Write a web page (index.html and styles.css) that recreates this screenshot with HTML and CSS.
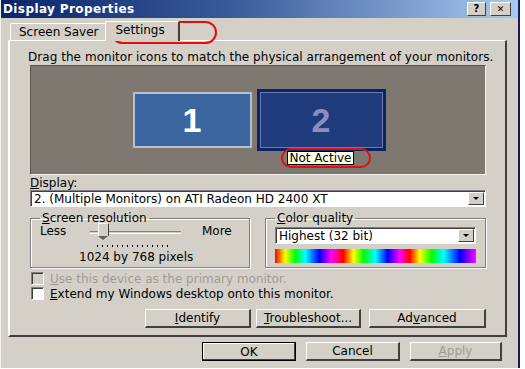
FILE: index.html
```html
<!DOCTYPE html>
<html lang="en">
<head>
  <meta charset="UTF-8">
  <title>Display Properties</title>
  <link rel="stylesheet" href="styles.css">
</head>
<body>
  <div class="window">
    <div class="titlebar">
      <span class="title">Display Properties</span>
      <div class="title-buttons">
        <span class="tbtn">?</span>
        <span class="tbtn close">&#x2715;</span>
      </div>
    </div>

    <div class="content">
      <div class="tabs">
        <div class="tab">Screen Saver</div>
        <div class="tab active">Settings</div>
      </div>

      <div class="panel">
        <p class="hint">Drag the monitor icons to match the physical arrangement of your monitors.</p>

        <div class="monitors">
          <div class="monitor one">1</div>
          <div class="monitor two">
            <span class="digit">2</span>
            <span class="tooltip">Not Active</span>
          </div>
        </div>

        <div class="field-label"><u>D</u>isplay:</div>
        <div class="select">
          <span class="select-text">2. (Multiple Monitors) on ATI Radeon HD 2400 XT</span>
          <span class="arrow"></span>
        </div>

        <div class="groups">
          <fieldset class="group res">
            <legend><u>S</u>creen resolution</legend>
            <div class="slider-row">
              <span class="less">Less</span>
              <div class="slider">
                <div class="track"></div>
                <div class="thumb"></div>
                <div class="ticks"></div>
              </div>
              <span class="more">More</span>
            </div>
            <div class="pixels">1024 by 768 pixels</div>
          </fieldset>

          <fieldset class="group color">
            <legend><u>C</u>olor quality</legend>
            <div class="select small">
              <span class="select-text">Highest (32 bit)</span>
              <span class="arrow"></span>
            </div>
            <div class="spectrum"></div>
          </fieldset>
        </div>

        <div class="check disabled"><span class="box"></span><span><u>U</u>se this device as the primary monitor.</span></div>
        <div class="check"><span class="box"></span><span><u>E</u>xtend my Windows desktop onto this monitor.</span></div>

        <div class="panel-buttons">
          <button class="btn identify"><u>I</u>dentify</button>
          <button class="btn trouble"><u>T</u>roubleshoot...</button>
          <button class="btn advanced">Ad<u>v</u>anced</button>
        </div>
      </div>

      <div class="footer">
        <button class="btn wide default">OK</button>
        <button class="btn wide">Cancel</button>
        <button class="btn wide apply disabled"><u>A</u>pply</button>
      </div>
    </div>

    <span class="mark mark-tab"></span>
    <span class="mark mark-tip"></span>
  </div>
</body>
</html>
```

FILE: styles.css
```css
body {
  margin: 0;
  background: #fff;
  font-family: "DejaVu Sans", Verdana, sans-serif;
  font-size: 12px;
  color: #000;
}

.window {
  position: relative;
  width: 520px;
  height: 368px;
  background: #d4d0c8;
  border-right: 2px solid #101c5c;
  border-left: 1px solid #f4f2ee;
  box-sizing: border-box;
}

.titlebar {
  height: 18px;
  display: flex;
  align-items: center;
  justify-content: space-between;
  padding: 0 7px 0 2px;
  background: linear-gradient(to right, #0a246a, #3a5c9a 45%, #a6caf0);
}

.title {
  color: #fff;
  font-weight: bold;
  letter-spacing: 0.4px;
}

.title-buttons {
  display: flex;
  gap: 4px;
}

.tbtn {
  width: 17px;
  height: 12px;
  line-height: 12px;
  text-align: center;
  font-size: 10px;
  font-weight: bold;
  background: #d4d0c8;
  border-top: 1px solid #fff;
  border-left: 1px solid #fff;
  border-right: 1px solid #404040;
  border-bottom: 1px solid #404040;
}

.tbtn.close {
  width: 19px;
  font-size: 9px;
}

.content {
  padding: 0 11px 0 7px;
}

.tabs {
  display: flex;
  align-items: flex-end;
  height: 22px;
  padding-left: 2px;
}

.tab {
  height: 16px;
  line-height: 16px;
  padding: 0 7px 0 8px;
  border-top: 1px solid #fff;
  border-left: 1px solid #fff;
  border-right: 1px solid #404040;
  border-radius: 2px 2px 0 0;
}

.tab.active {
  height: 19px;
  line-height: 17px;
  padding: 0 13px 0 9px;
  margin-left: -1px;
  margin-bottom: -1px;
  background: #d4d0c8;
  border-right: 2px solid #404040;
  position: relative;
  z-index: 1;
}

.panel {
  height: 297px;
  box-sizing: border-box;
  border-top: 1px solid #fff;
  border-left: 2px solid #fff;
  border-right: 2px solid #404040;
  border-bottom: 2px solid #404040;
  padding: 0 19px 0 20px;
  display: flex;
  flex-direction: column;
}

.hint {
  margin: 9px 0 0 -2px;
  line-height: 14px;
  white-space: nowrap;
  letter-spacing: 0.05px;
}

.monitors {
  margin-top: 1px;
  height: 110px;
  background: #7e7871;
  border-top: 1px solid #5a554f;
  border-left: 1px solid #5a554f;
  border-right: 1px solid #f4f2ee;
  border-bottom: 1px solid #f4f2ee;
  display: flex;
  justify-content: center;
  align-items: center;
  gap: 5px;
  box-sizing: border-box;
}

.monitor {
  box-sizing: border-box;
  display: flex;
  align-items: center;
  justify-content: center;
  font-family: "Liberation Sans", Arial, sans-serif;
  font-weight: bold;
  font-size: 34px;
}

.monitor.one {
  width: 119px;
  height: 56px;
  background: #3b66a0;
  border: 2px solid #b6bfcc;
  color: #fff;
  margin-left: 2px;
}

.monitor.two {
  position: relative;
  width: 129px;
  height: 62px;
  background: #1f3b7b;
  border: 3px solid #0c2266;
  box-shadow: inset 0 0 0 1px #6a7cb0;
  color: #8a8ec4;
}

.tooltip {
  position: absolute;
  top: 59px;
  left: 27px;
  font-family: "DejaVu Sans", Verdana, sans-serif;
  font-weight: normal;
  font-size: 12px;
  line-height: 12px;
  color: #000;
  background: #ffffe1;
  border: 1px solid #000;
  padding: 0 2px;
  white-space: nowrap;
}

.field-label {
  margin-top: 2px;
  line-height: 13px;
}

.select {
  height: 17px;
  box-sizing: border-box;
  display: flex;
  align-items: center;
  justify-content: space-between;
  background: #fff;
  border-top: 1px solid #808080;
  border-left: 1px solid #808080;
  border-right: 1px solid #fff;
  border-bottom: 1px solid #fff;
  box-shadow: inset 1px 1px 0 #404040;
  padding-left: 3px;
}

.select-text {
  white-space: nowrap;
}

.arrow {
  width: 16px;
  height: 13px;
  margin-right: 1px;
  background: #d4d0c8;
  border-top: 1px solid #fff;
  border-left: 1px solid #fff;
  border-right: 1px solid #404040;
  border-bottom: 1px solid #404040;
  box-sizing: border-box;
  position: relative;
}

.arrow::after {
  content: "";
  position: absolute;
  left: 4px;
  top: 4px;
  border-left: 3px solid transparent;
  border-right: 3px solid transparent;
  border-top: 3px solid #000;
}

.groups {
  display: flex;
  gap: 15px;
  margin-top: 5px;
}

.group {
  margin: 0;
  height: 56px;
  box-sizing: border-box;
  border: 1px solid #808080;
  box-shadow: 1px 1px 0 #fff, inset 1px 1px 0 #fff;
  padding: 0 9px 0 9px;
}

.group legend {
  padding: 0 2px;
  line-height: 13px;
}

.group.res {
  width: 220px;
}

.group.color {
  flex: 1;
}

.slider-row {
  display: flex;
  align-items: flex-start;
  height: 26px;
}

.less {
  width: 50px;
  line-height: 13px;
}

.slider {
  position: relative;
  width: 91px;
  height: 26px;
}

.track {
  position: absolute;
  top: 6px;
  left: 0;
  right: 0;
  height: 1px;
  border-top: 1px solid #808080;
  border-bottom: 1px solid #fff;
}

.thumb {
  position: absolute;
  left: 8px;
  top: -2px;
  width: 9px;
  height: 12px;
  background: #d4d0c8;
  border-top: 1px solid #fff;
  border-left: 1px solid #fff;
  border-right: 1px solid #404040;
}

.thumb::after {
  content: "";
  position: absolute;
  left: -1px;
  top: 12px;
  border-left: 5px solid transparent;
  border-right: 5px solid transparent;
  border-top: 4px solid #606060;
}

.ticks {
  position: absolute;
  top: 20px;
  left: 7px;
  width: 72px;
  height: 2px;
  background: repeating-linear-gradient(to right, #000 0 1px, transparent 1px 5px);
}

.more {
  margin-left: 21px;
  line-height: 13px;
}

.pixels {
  padding-left: 39px;
  line-height: 13px;
}

.select.small {
  margin-top: 2px;
}

.spectrum {
  margin-top: 5px;
  height: 14px;
  background: linear-gradient(to right,
    #f00, #ff0 5%, #0f0 10%, #0ff 15%, #00f 22%, #f0f 28%,
    #f00 34%, #ff0 39%, #0f0 44%, #0ff 50%, #00f 56%, #f0f 62%,
    #f00 67%, #ff0 72%, #0f0 78%, #0ff 84%, #00f 92%, #f0f);
}

.check {
  display: flex;
  align-items: center;
  gap: 6px;
  height: 15px;
  line-height: 14px;
  margin-left: 1px;
}

.groups + .check {
  margin-top: 3px;
}

.box {
  width: 13px;
  height: 13px;
  box-sizing: border-box;
  background: #fff;
  border-top: 1px solid #808080;
  border-left: 1px solid #808080;
  border-right: 1px solid #fff;
  border-bottom: 1px solid #fff;
  box-shadow: inset 1px 1px 0 #404040;
}

.check.disabled {
  color: #a09c94;
}

.check.disabled .box {
  background: #d4d0c8;
}

.panel-buttons {
  display: flex;
  justify-content: flex-end;
  gap: 5px;
  margin-top: 8px;
}

.btn {
  font-family: "DejaVu Sans", Verdana, sans-serif;
  font-size: 12px;
  height: 19px;
  padding: 0;
  background: #d4d0c8;
  color: #000;
  border-top: 1px solid #fff;
  border-left: 1px solid #fff;
  border-right: 2px solid #404040;
  border-bottom: 2px solid #404040;
}

.btn.identify {
  width: 106px;
}

.btn.trouble {
  width: 105px;
}

.btn.advanced {
  width: 117px;
  margin-left: 3px;
}

.footer {
  display: flex;
  justify-content: flex-end;
  gap: 10px;
  margin-top: 5px;
  padding-right: 5px;
}

.btn.wide {
  width: 94px;
}

.btn.apply {
  width: 92px;
}

.btn.default {
  border: 1px solid #000;
  box-shadow: inset -1px -1px 0 #404040, inset 1px 1px 0 #fff;
}

.btn.disabled {
  color: #a09c94;
}

.mark {
  position: absolute;
  border: 2px solid #e01010;
  box-sizing: border-box;
}

.mark-tab {
  left: 110px;
  top: 21px;
  width: 106px;
  height: 23px;
  border-radius: 12px;
}

.mark-tip {
  left: 280px;
  top: 148px;
  width: 90px;
  height: 20px;
  border-radius: 10px;
}
```
